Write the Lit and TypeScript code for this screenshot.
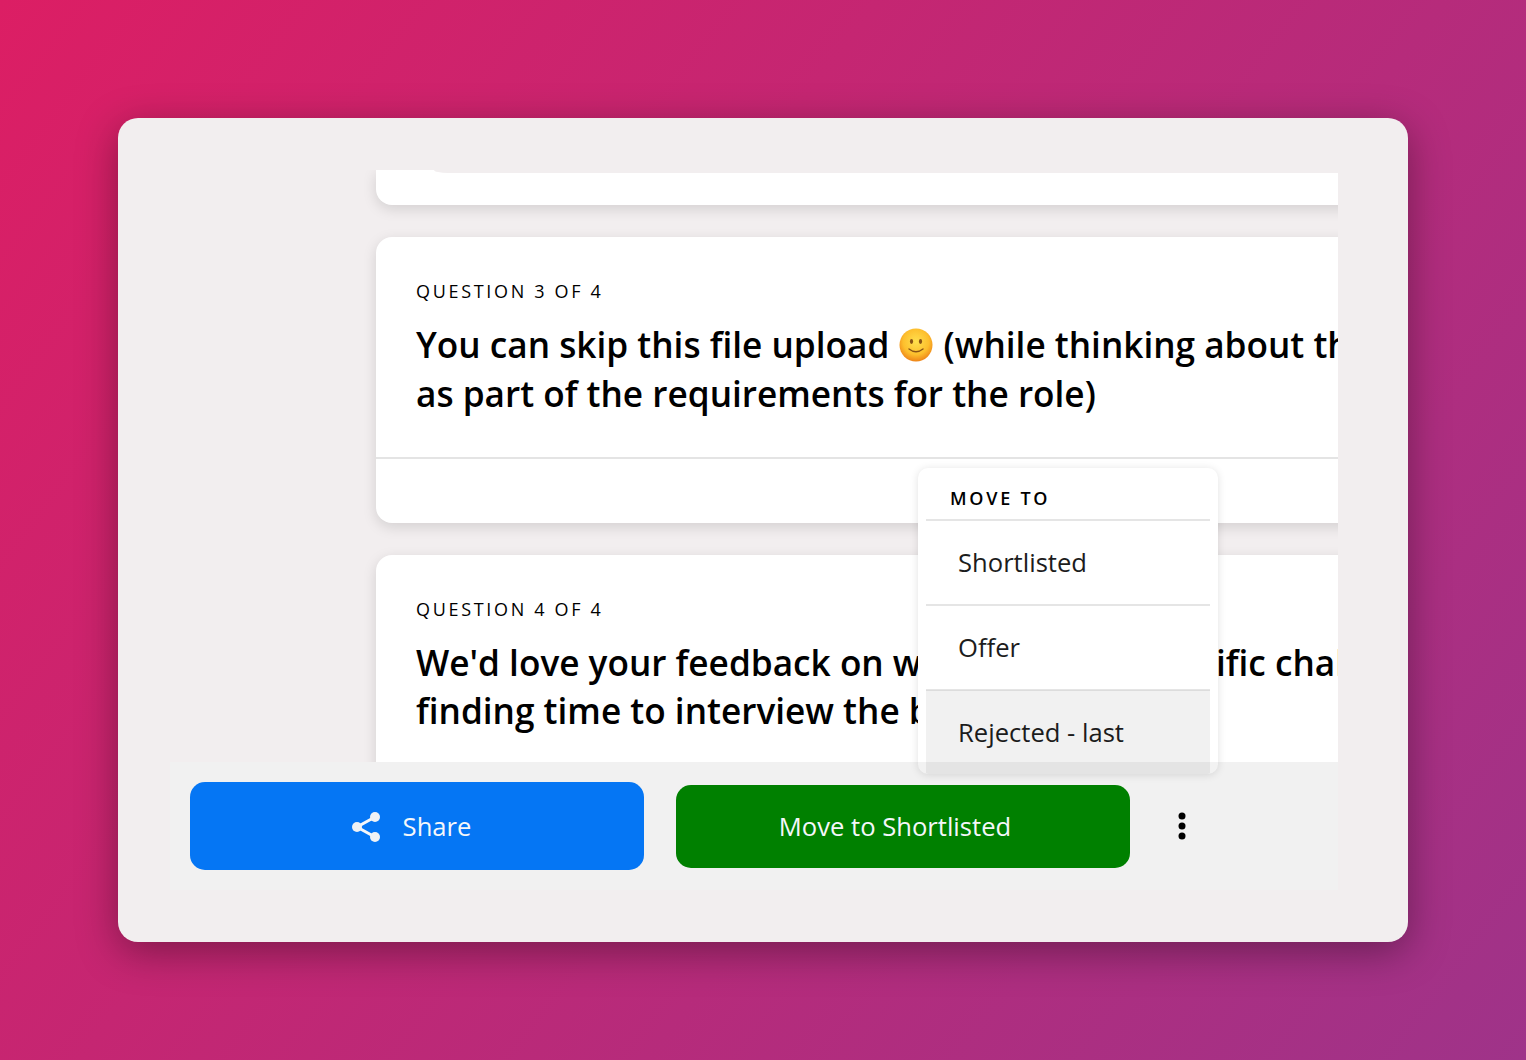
import { LitElement, html, css } from "lit";
import { customElement } from "lit/decorators.js";

@customElement("app-root")
export class AppRoot extends LitElement {
  static styles = css`
    :host {
      display: block;
      width: 1526px;
      height: 1060px;
      overflow: hidden;
      font-family: "Open Sans", "Noto Sans", sans-serif;
      color: #000;
    }
    .page {
      box-sizing: border-box;
      width: 1526px;
      height: 1060px;
      padding: 118px;
      background: linear-gradient(127deg, #dc1e64 0%, #9f3389 100%);
    }
    .window {
      box-sizing: border-box;
      width: 1290px;
      height: 824px;
      padding: 52px 70px 52px 52px;
      background: #f2eeef;
      border-radius: 20px;
      box-shadow: 0 10px 40px rgba(0, 0, 0, 0.36);
    }
    .viewport {
      position: relative;
      height: 720px;
      overflow: hidden;
    }
    .list {
      display: flex;
      flex-direction: column;
      gap: 32px;
      padding-left: 206px;
      margin-right: -300px;
    }
    .card {
      box-sizing: border-box;
      background: #fff;
      border-radius: 16px;
      box-shadow: 0 4px 14px rgba(0, 0, 0, 0.13);
    }
    .card.stub {
      height: 35px;
      border-radius: 0 0 16px 16px;
    }
    .notch {
      height: 3px;
      margin-left: 58px;
      background: #f2eeef;
      border-bottom-left-radius: 14px 3px;
    }
    .card.full { height: 286px; }
    .card.tall { height: 320px; }
    .body { height: 222px; box-sizing: border-box; padding: 40px 40px 0; border-bottom: 2px solid #e4e4e4; }
    .label {
      font-size: 18px;
      line-height: 28px;
      letter-spacing: 2.67px;
      white-space: nowrap;
    }
    .title {
      margin-top: 15px;
      font-size: 35.2px;
      line-height: 49px;
      font-weight: 600;
      white-space: nowrap;
    }
    .tall .title { line-height: 48px; }
    .tight { word-spacing: -4.5px; }
    .emoji {
      width: 34px;
      height: 34px;
      vertical-align: -4px;
      margin: 0 1px;
    }
    .bar {
      position: absolute;
      left: 0;
      right: 0;
      bottom: 0;
      height: 128px;
      box-sizing: border-box;
      padding-left: 20px;
      display: flex;
      align-items: center;
      background: #f1f1f1;
    }
    .btn {
      box-sizing: border-box;
      width: 454px;
      border-radius: 15px;
      display: flex;
      align-items: center;
      justify-content: center;
      font-size: 25.6px;
      color: #f5f7fa;
    }
    .share { height: 88px; background: #0576f4; gap: 20px; padding-right: 12px; }
    .share svg { width: 32px; height: 32px; }
    .move { height: 83px; margin-left: 32px; background: #008000; padding-right: 16px; }
    .dots { width: 8px; height: 32px; margin-left: 48px; }
    .menu {
      position: absolute;
      left: 748px;
      top: 298px;
      width: 300px;
      height: 306px;
      box-sizing: border-box;
      padding: 0 8px;
      background: #fff;
      border-radius: 10px;
      box-shadow: 0 1px 8px rgba(0, 0, 0, 0.12);
      overflow: hidden;
    }
    .menu-head {
      height: 53px;
      box-sizing: border-box;
      padding: 16px 0 0 24px;
      border-bottom: 2px solid #e5e5e5;
      font-size: 18px;
      line-height: 28px;
      font-weight: 600;
      letter-spacing: 2.75px;
      white-space: nowrap;
    }
    .item {
      height: 85px;
      box-sizing: border-box;
      display: flex;
      align-items: center;
      padding-left: 32px;
      font-size: 25.6px;
      color: #1c1c1c;
      border-bottom: 2px solid #e5e5e5;
    }
    .item.last { border-bottom: 0; background: #f1f1f1; border-top: 1px solid #dcdcdc; margin-top: -1px; height: 86px; align-items: flex-start; padding-top: 24px; }
    .menu-fade {
      position: absolute;
      left: 0;
      right: 0;
      bottom: 0;
      height: 12px;
      background: rgba(0, 0, 0, 0.05);
    }
  `;

  render() {
    return html`
      <div class="page">
        <div class="window">
          <div class="viewport">
            <div class="list">
              <div class="card stub"><div class="notch"></div></div>
              <div class="card full">
                <div class="body">
                  <div class="label">QUESTION 3 OF 4</div>
                  <div class="title">
                    You can skip this file upload
                    <svg class="emoji" viewBox="0 0 34 34">
                      <defs>
                        <radialGradient id="face" cx="50%" cy="40%" r="60%">
                          <stop offset="0" stop-color="#ffe04e"></stop>
                          <stop offset="0.65" stop-color="#fdbf2d"></stop>
                          <stop offset="1" stop-color="#ee8418"></stop>
                        </radialGradient>
                      </defs>
                      <circle cx="17" cy="17" r="16.5" fill="url(#face)"></circle>
                      <ellipse cx="12.5" cy="13.5" rx="1.6" ry="2.4" fill="#8a5314"></ellipse>
                      <ellipse cx="21.5" cy="13.5" rx="1.6" ry="2.4" fill="#8a5314"></ellipse>
                      <path d="M10 21 Q17 26.5 24 21" fill="none" stroke="#8a5314" stroke-width="1.4" stroke-linecap="round"></path>
                    </svg>
                    (while thinking about the role)<br />as part of the requirements for the role)
                  </div>
                </div>
              </div>
              <div class="card tall">
                <div class="body">
                  <div class="label">QUESTION 4 OF 4</div>
                  <div class="title">
                    We'd love your feedback on <span class="tight">whether these specific</span> challenges<br />finding time to interview the best candidates
                  </div>
                </div>
              </div>
            </div>
            <div class="bar">
              <div class="btn share">
                <svg viewBox="0 0 32 32">
                  <path d="M24 7 L6 17 L24 27" fill="none" stroke="#f5f7fa" stroke-width="3"></path>
                  <circle cx="24" cy="7" r="5" fill="#f0f2f5"></circle>
                  <circle cx="6" cy="17" r="5" fill="#f0f2f5"></circle>
                  <circle cx="24" cy="27" r="5" fill="#f0f2f5"></circle>
                </svg>
                <span>Share</span>
              </div>
              <div class="btn move">Move to Shortlisted</div>
              <svg class="dots" viewBox="0 0 8 32">
                <circle cx="4" cy="6" r="3.5" fill="#000"></circle>
                <circle cx="4" cy="16" r="3.5" fill="#000"></circle>
                <circle cx="4" cy="26" r="3.5" fill="#000"></circle>
              </svg>
            </div>
            <div class="menu">
              <div class="menu-head">MOVE TO</div>
              <div class="item">Shortlisted</div>
              <div class="item">Offer</div>
              <div class="item last">Rejected - last</div>
              <div class="menu-fade"></div>
            </div>
          </div>
        </div>
      </div>
    `;
  }
}
